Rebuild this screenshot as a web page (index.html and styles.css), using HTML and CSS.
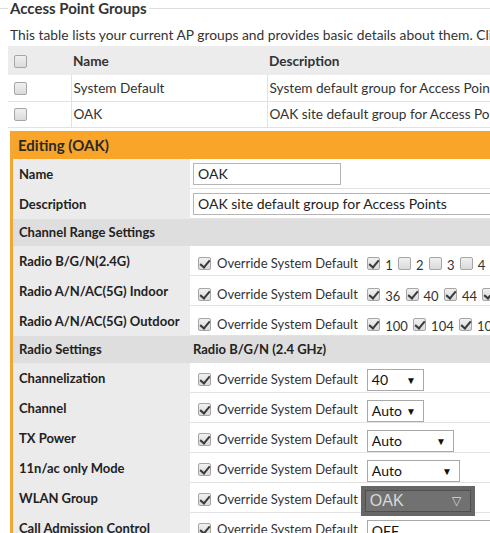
FILE: index.html
```html
<!DOCTYPE html>
<html lang="en">
<head>
    <meta charset="UTF-8">
    <title>Access Point Groups</title>
    <link rel="stylesheet" href="styles.css">
</head>
<body>

    <fieldset class="groups">
        <legend>Access Point Groups</legend>
        <p class="intro">This table lists your current AP groups and provides basic details about them. Click on a group to edit it.</p>

        <table class="ap-table">
            <thead>
                <tr>
                    <th class="col-check"><span class="cb"></span></th>
                    <th class="col-name">Name</th>
                    <th>Description</th>
                </tr>
            </thead>
            <tbody>
                <tr>
                    <td class="col-check"><span class="cb"></span></td>
                    <td class="col-name">System Default</td>
                    <td>System default group for Access Points</td>
                </tr>
                <tr>
                    <td class="col-check"><span class="cb"></span></td>
                    <td class="col-name">OAK</td>
                    <td>OAK site default group for Access Points</td>
                </tr>
            </tbody>
        </table>

        <div class="editor">
            <div class="editor-title">Editing (OAK)</div>
            <table class="edit-form">
                <tr>
                    <th>Name</th>
                    <td class="field"><span class="text-input name-input">OAK</span></td>
                </tr>
                <tr>
                    <th>Description</th>
                    <td class="field"><span class="text-input desc-input">OAK site default group for Access Points</span></td>
                </tr>
                <tr class="section">
                    <th colspan="2">Channel Range Settings</th>
                </tr>
                <tr>
                    <th>Radio B/G/N(2.4G)</th>
                    <td>
                        <span class="cb checked"></span><span class="override">Override System Default</span>
                        <span class="channels">
                            <span class="cb checked"></span><b>1</b>
                            <span class="cb"></span><b>2</b>
                            <span class="cb"></span><b>3</b>
                            <span class="cb"></span><b>4</b>
                            <span class="cb"></span><b>5</b>
                        </span>
                    </td>
                </tr>
                <tr>
                    <th>Radio A/N/AC(5G) Indoor</th>
                    <td>
                        <span class="cb checked"></span><span class="override">Override System Default</span>
                        <span class="channels">
                            <span class="cb checked"></span><b>36</b>
                            <span class="cb checked"></span><b>40</b>
                            <span class="cb checked"></span><b>44</b>
                            <span class="cb checked"></span><b>48</b>
                        </span>
                    </td>
                </tr>
                <tr>
                    <th>Radio A/N/AC(5G) Outdoor</th>
                    <td>
                        <span class="cb checked"></span><span class="override">Override System Default</span>
                        <span class="channels">
                            <span class="cb checked"></span><b>100</b>
                            <span class="cb checked"></span><b>104</b>
                            <span class="cb checked"></span><b>108</b>
                        </span>
                    </td>
                </tr>
                <tr class="section">
                    <th>Radio Settings</th>
                    <th class="sub">Radio B/G/N (2.4 GHz)</th>
                </tr>
                <tr>
                    <th>Channelization</th>
                    <td><span class="cb checked"></span><span class="override">Override System Default</span><span class="select w57">40<i>&#9660;</i></span></td>
                </tr>
                <tr>
                    <th>Channel</th>
                    <td><span class="cb checked"></span><span class="override">Override System Default</span><span class="select w57">Auto<i>&#9660;</i></span></td>
                </tr>
                <tr>
                    <th>TX Power</th>
                    <td><span class="cb checked"></span><span class="override">Override System Default</span><span class="select w87">Auto<i>&#9660;</i></span></td>
                </tr>
                <tr>
                    <th>11n/ac only Mode</th>
                    <td><span class="cb checked"></span><span class="override">Override System Default</span><span class="select w93">Auto<i>&#9660;</i></span></td>
                </tr>
                <tr>
                    <th>WLAN Group</th>
                    <td><span class="cb checked"></span><span class="override">Override System Default</span><span class="select dark">OAK<i>&#9661;</i></span></td>
                </tr>
                <tr>
                    <th>Call Admission Control</th>
                    <td><span class="cb checked"></span><span class="override">Override System Default</span><span class="select w150">OFF<i>&#9660;</i></span></td>
                </tr>
            </table>
        </div>
    </fieldset>

</body>
</html>
```

FILE: styles.css
```css
* {
    box-sizing: border-box;
}

html, body {
    margin: 0;
    padding: 0;
    overflow: hidden;
    background: #fff;
}

body {
    font-family: Lato, 'Open Sans', sans-serif;
    font-size: 13px;
    color: #333;
}

/* --- group box --- */
.groups {
    width: 680px;
    margin: 0;
    padding: 0;
    border: none;
    border-top: 1px solid #dedede;
}

.groups legend {
    margin-left: 8px;
    padding: 0 2px;
    font-size: 15px;
    font-weight: bold;
    line-height: 16px;
    color: #333;
}

.intro {
    margin: 11px 0 3px 10px;
    font-size: 13.8px;
    line-height: 16px;
    white-space: nowrap;
}

/* --- group list --- */
.ap-table {
    margin-left: 8px;
    width: 672px;
    border-collapse: collapse;
    font-size: 13.6px;
}

.ap-table th {
    height: 29px;
    background: #ececec;
    text-align: left;
    font-weight: bold;
    padding: 0 0 0 2px;
}

.ap-table td {
    height: 26px;
    padding: 0 0 0 2px;
    border-bottom: 1px solid #e2e2e2;
    border-left: 1px solid #e2e2e2;
    white-space: nowrap;
}

.ap-table .col-check {
    width: 63px;
    padding-left: 6px;
    border-left: none;
}

.ap-table .col-name {
    width: 196px;
}

/* --- checkboxes --- */
.cb {
    display: inline-block;
    position: relative;
    width: 13px;
    height: 13px;
    vertical-align: -2px;
    border: 1px solid #a6a6a6;
    border-radius: 2px;
    background: linear-gradient(#f0f0f0, #dadada);
}

.cb.checked::after {
    content: "";
    position: absolute;
    left: 3px;
    top: 0;
    width: 4px;
    height: 8px;
    border-right: 2px solid #3a3a3a;
    border-bottom: 2px solid #3a3a3a;
    transform: rotate(40deg);
}

/* --- editor --- */
.editor {
    margin: 3px 0 0 10px;
    border-left: 3px solid #f2a634;
}

.editor-title {
    height: 28px;
    line-height: 28px;
    padding-left: 5px;
    background: #f8a52a;
    font-size: 15px;
    font-weight: bold;
    color: #2a2a2a;
}

.edit-form {
    width: 100%;
    border-collapse: collapse;
}

.edit-form th {
    width: 177px;
    height: 30px;
    padding: 0 0 0 6px;
    background: #ebebeb;
    text-align: left;
    font-weight: bold;
    color: #222;
    white-space: nowrap;
}

.edit-form td {
    height: 30px;
    padding: 6px 0 0 3px;
    border-bottom: 1px solid #e2e2e2;
    white-space: nowrap;
}

.edit-form td.field {
    padding-top: 1px;
}

.edit-form .section th {
    height: 27px;
    background: #dedede;
}

.edit-form .section .sub {
    width: auto;
    padding-left: 3px;
}

.edit-form td > .cb {
    margin-left: 5px;
}

.override {
    margin-left: 6px;
}

.channels {
    margin-left: 6px;
}

.channels .cb {
    margin-right: 5px;
}

.channels b {
    font-weight: normal;
    position: relative;
    top: 2px;
    margin-right: 2px;
}

/* --- inputs --- */
.text-input {
    display: inline-block;
    height: 22px;
    line-height: 20px;
    padding: 0 4px;
    border: 1px solid #b5b5b5;
    font-size: 14px;
    color: #222;
    vertical-align: middle;
}

.name-input {
    width: 148px;
}

.desc-input {
    width: 320px;
}

.select {
    display: inline-block;
    position: relative;
    height: 22px;
    line-height: 20px;
    margin-left: 9px;
    padding: 0 4px;
    border: 1px solid #a9a9a9;
    background: #fff;
    font-size: 14px;
    color: #111;
    vertical-align: middle;
}

.select i {
    position: absolute;
    right: 7px;
    top: 0;
    font-style: normal;
    font-size: 10px;
}

.w57 { width: 57px; }
.w87 { width: 87px; }
.w93 { width: 93px; }
.w150 { width: 150px; }

.select.dark {
    width: 106px;
    margin-left: 7px;
    background: #717171;
    border-color: #505050;
    box-shadow: 0 0 0 4px #666;
    color: #dadada;
    font-family: 'Liberation Sans', sans-serif;
    font-size: 16px;
}

.select.dark i {
    right: 9px;
    color: #dadada;
    font-size: 12px;
}
```
